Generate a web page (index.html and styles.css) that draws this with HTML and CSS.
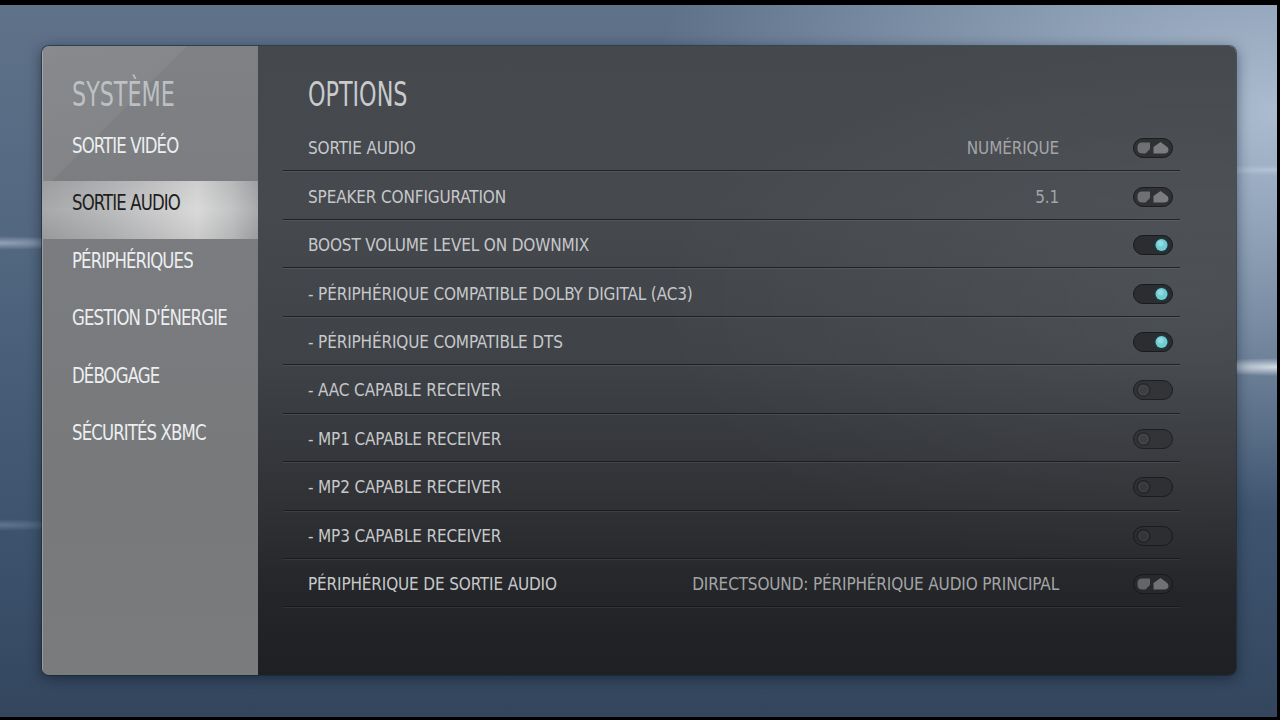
FILE: index.html
```html
<!DOCTYPE html>
<html lang="fr">
<head>
<meta charset="utf-8">
<title>Système - Sortie audio</title>
<link rel="stylesheet" href="styles.css">
</head>
<body>
<div class="screen">
  <div class="window">
    <aside class="sidebar">
      <div class="side-title"><span class="big">SYSTÈME</span></div>
      <ul class="menu">
        <li class="item"><span class="txt">SORTIE VIDÉO</span></li>
        <li class="item active"><span class="txt">SORTIE AUDIO</span></li>
        <li class="item"><span class="txt">PÉRIPHÉRIQUES</span></li>
        <li class="item"><span class="txt">GESTION D'ÉNERGIE</span></li>
        <li class="item"><span class="txt">DÉBOGAGE</span></li>
        <li class="item"><span class="txt">SÉCURITÉS XBMC</span></li>
      </ul>
    </aside>
    <main class="content">
      <h1 class="title"><span class="big">OPTIONS</span></h1>
      <div class="rows">
        <div class="row">
          <span class="label">SORTIE AUDIO</span>
          <span class="value">NUMÉRIQUE</span>
          <svg class="ctl" viewBox="0 0 40 20" width="40" height="20"><rect x="0.5" y="0.5" width="39" height="19" rx="9.5" fill="#2f3134" stroke="#1c1d1f"/><path d="M4.5 9 Q4.5 4.5 9 4.5 H17 V11 L12.5 15.5 H10 Q4.5 15.5 4.5 11 Z" fill="#6e7073"/><path d="M20.5 15.5 V9 L27.5 4 L33 8 Q35.5 9.5 35.5 11.5 Q35.5 15.5 31 15.5 Z" fill="#7a7c7f"/></svg>
        </div>
        <div class="row">
          <span class="label">SPEAKER CONFIGURATION</span>
          <span class="value">5.1</span>
          <svg class="ctl" viewBox="0 0 40 20" width="40" height="20"><rect x="0.5" y="0.5" width="39" height="19" rx="9.5" fill="#2f3134" stroke="#1c1d1f"/><path d="M4.5 9 Q4.5 4.5 9 4.5 H17 V11 L12.5 15.5 H10 Q4.5 15.5 4.5 11 Z" fill="#6e7073"/><path d="M20.5 15.5 V9 L27.5 4 L33 8 Q35.5 9.5 35.5 11.5 Q35.5 15.5 31 15.5 Z" fill="#7a7c7f"/></svg>
        </div>
        <div class="row">
          <span class="label">BOOST VOLUME LEVEL ON DOWNMIX</span>
          <svg class="ctl" viewBox="0 0 40 20" width="40" height="20"><rect x="0.5" y="0.5" width="39" height="19" rx="9.5" fill="#2b2d30" stroke="#1a1b1d"/><circle cx="28.5" cy="10" r="7.5" fill="#1d3a3e"/><circle cx="28.5" cy="10" r="6" fill="#74cbd2"/><circle cx="27.5" cy="8.5" r="3" fill="#8fdbe0"/></svg>
        </div>
        <div class="row">
          <span class="label">- PÉRIPHÉRIQUE COMPATIBLE DOLBY DIGITAL (AC3)</span>
          <svg class="ctl" viewBox="0 0 40 20" width="40" height="20"><rect x="0.5" y="0.5" width="39" height="19" rx="9.5" fill="#2b2d30" stroke="#1a1b1d"/><circle cx="28.5" cy="10" r="7.5" fill="#1d3a3e"/><circle cx="28.5" cy="10" r="6" fill="#74cbd2"/><circle cx="27.5" cy="8.5" r="3" fill="#8fdbe0"/></svg>
        </div>
        <div class="row">
          <span class="label">- PÉRIPHÉRIQUE COMPATIBLE DTS</span>
          <svg class="ctl" viewBox="0 0 40 20" width="40" height="20"><rect x="0.5" y="0.5" width="39" height="19" rx="9.5" fill="#2b2d30" stroke="#1a1b1d"/><circle cx="28.5" cy="10" r="7.5" fill="#1d3a3e"/><circle cx="28.5" cy="10" r="6" fill="#74cbd2"/><circle cx="27.5" cy="8.5" r="3" fill="#8fdbe0"/></svg>
        </div>
        <div class="row">
          <span class="label">- AAC CAPABLE RECEIVER</span>
          <svg class="ctl" viewBox="0 0 40 20" width="40" height="20"><rect x="0.5" y="0.5" width="39" height="19" rx="9.5" fill="#323437" stroke="#1e1f21"/><circle cx="10.5" cy="10" r="7" fill="#28292c"/><circle cx="10.5" cy="10" r="5.5" fill="#434548"/><circle cx="10.5" cy="10" r="3.5" fill="#3c3e41"/></svg>
        </div>
        <div class="row">
          <span class="label">- MP1 CAPABLE RECEIVER</span>
          <svg class="ctl" viewBox="0 0 40 20" width="40" height="20"><rect x="0.5" y="0.5" width="39" height="19" rx="9.5" fill="#323437" stroke="#1e1f21"/><circle cx="10.5" cy="10" r="7" fill="#28292c"/><circle cx="10.5" cy="10" r="5.5" fill="#434548"/><circle cx="10.5" cy="10" r="3.5" fill="#3c3e41"/></svg>
        </div>
        <div class="row">
          <span class="label">- MP2 CAPABLE RECEIVER</span>
          <svg class="ctl" viewBox="0 0 40 20" width="40" height="20"><rect x="0.5" y="0.5" width="39" height="19" rx="9.5" fill="#2e3033" stroke="#1b1c1e"/><circle cx="10.5" cy="10" r="7" fill="#242527"/><circle cx="10.5" cy="10" r="5.5" fill="#3d3e41"/><circle cx="10.5" cy="10" r="3.5" fill="#37383b"/></svg>
        </div>
        <div class="row">
          <span class="label">- MP3 CAPABLE RECEIVER</span>
          <svg class="ctl" viewBox="0 0 40 20" width="40" height="20"><rect x="0.5" y="0.5" width="39" height="19" rx="9.5" fill="#2c2e31" stroke="#1a1b1d"/><circle cx="10.5" cy="10" r="7" fill="#222325"/><circle cx="10.5" cy="10" r="5.5" fill="#3a3b3e"/><circle cx="10.5" cy="10" r="3.5" fill="#343538"/></svg>
        </div>
        <div class="row">
          <span class="label">PÉRIPHÉRIQUE DE SORTIE AUDIO</span>
          <span class="value">DIRECTSOUND: PÉRIPHÉRIQUE AUDIO PRINCIPAL</span>
          <svg class="ctl" viewBox="0 0 40 20" width="40" height="20"><rect x="0.5" y="0.5" width="39" height="19" rx="9.5" fill="#27292c" stroke="#18191b"/><path d="M4.5 9 Q4.5 4.5 9 4.5 H17 V11 L12.5 15.5 H10 Q4.5 15.5 4.5 11 Z" fill="#636568"/><path d="M20.5 15.5 V9 L27.5 4 L33 8 Q35.5 9.5 35.5 11.5 Q35.5 15.5 31 15.5 Z" fill="#6f7174"/></svg>
        </div>
      </div>
    </main>
  </div>
</div>
</body>
</html>
```

FILE: styles.css
```css
html, body {
  margin: 0;
  padding: 0;
  background: #000;
  width: 1280px;
  height: 720px;
  overflow: hidden;
}

body {
  font-family: "DejaVu Sans Condensed", "DejaVu Sans", "Liberation Sans", sans-serif;
  font-stretch: condensed;
}

.screen {
  margin: 5px 3px 3px 0;
  width: 1277px;
  height: 712px;
  box-sizing: border-box;
  padding: 41px 0 0 42px;
  background:
    radial-gradient(ellipse 90px 7px at 0px 238px, rgba(225, 235, 248, 0.45), rgba(225, 235, 248, 0) 100%),
    radial-gradient(ellipse 70px 6px at 0px 520px, rgba(200, 215, 235, 0.25), rgba(200, 215, 235, 0) 100%),
    radial-gradient(ellipse 90px 9px at 1277px 362px, rgba(245, 250, 255, 0.75), rgba(245, 250, 255, 0) 100%),
    radial-gradient(ellipse 90px 5px at 1277px 165px, rgba(230, 238, 250, 0.3), rgba(230, 238, 250, 0) 100%),
    radial-gradient(ellipse 70% 80% at 100% 15%, rgba(175, 192, 212, 0.95), rgba(175, 192, 212, 0) 70%),
    linear-gradient(180deg, #5f728a 0%, #51667f 35%, #3f5570 70%, #33465e 100%);
}

.window {
  display: flex;
  width: 1194px;
  height: 629px;
  border-radius: 7px;
  overflow: hidden;
  box-shadow: 0 0 0 1px rgba(25, 35, 50, 0.55), 0 3px 14px rgba(10, 18, 30, 0.55);
}

/* ---------- Sidebar ---------- */
.sidebar {
  flex: none;
  width: 216px;
  background:
    linear-gradient(135deg, rgba(255, 255, 255, 0.07) 0%, rgba(255, 255, 255, 0.05) 17%, rgba(0, 0, 0, 0) 17.3%),
    linear-gradient(180deg, #7f8184 0%, #7a7c7f 30%, #77797b 70%, #7a7b7d 100%);
  box-shadow: inset 1px 0 0 rgba(255, 255, 255, 0.25);
}

.big {
  display: inline-block;
  font-size: 33px;
  line-height: 33px;
  transform: scaleX(0.75);
  transform-origin: left center;
}

.side-title {
  height: 77.5px;
  box-sizing: border-box;
  padding: 32px 0 0 30px;
  color: rgba(205, 210, 215, 0.8);
}

.menu {
  list-style: none;
  margin: 0;
  padding: 0;
}

.item {
  height: 57.5px;
  box-sizing: border-box;
  padding: 12px 0 0 30px;
  font-size: 21px;
  line-height: 21px;
  color: #eceef0;
}

.txt {
  display: inline-block;
  white-space: nowrap;
  letter-spacing: -1px;
  transform: scaleX(0.876);
  transform-origin: left center;
}

.item.active {
  color: #1d1e20;
  background:
    linear-gradient(180deg, rgba(0, 0, 0, 0.04) 0%, rgba(255, 255, 255, 0.06) 50%, rgba(0, 0, 0, 0.06) 100%),
    linear-gradient(90deg, #a2a3a5 0%, #b5b6b8 30%, #cdcdce 60%, #d7d7d7 72%, #bfc0c1 88%, #a3a5a7 100%);
}

/* ---------- Content ---------- */
.content {
  flex: 1;
  padding: 0 56px 0 25px;
  background:
    radial-gradient(ellipse 55% 45% at 95% 40%, rgba(255, 255, 255, 0.06), rgba(255, 255, 255, 0) 100%),
    linear-gradient(180deg, #45484d 0%, #46494e 25%, #3f4247 50%, #303236 72%, #242528 88%, #1f2023 100%);
}

.title {
  margin: 0;
  height: 77px;
  box-sizing: border-box;
  padding: 30px 0 0 25px;
  font-weight: normal;
  color: #c9cbcd;
}

.rows {
  display: flex;
  flex-direction: column;
}

.row {
  display: flex;
  align-items: center;
  height: 48.45px;
  box-sizing: border-box;
  padding: 3px 0 0 25px;
  border-bottom: 1px solid rgba(20, 21, 24, 0.75);
  box-shadow: 0 1px 0 rgba(255, 255, 255, 0.07);
  font-size: 17px;
  letter-spacing: -0.15px;
  color: #c6c8ca;
}

.label {
  flex: 1;
  white-space: nowrap;
}

.value {
  color: #a3a5a7;
  white-space: nowrap;
}

.ctl {
  flex: none;
  display: block;
  margin: 0 7px 0 74px;
}
```
